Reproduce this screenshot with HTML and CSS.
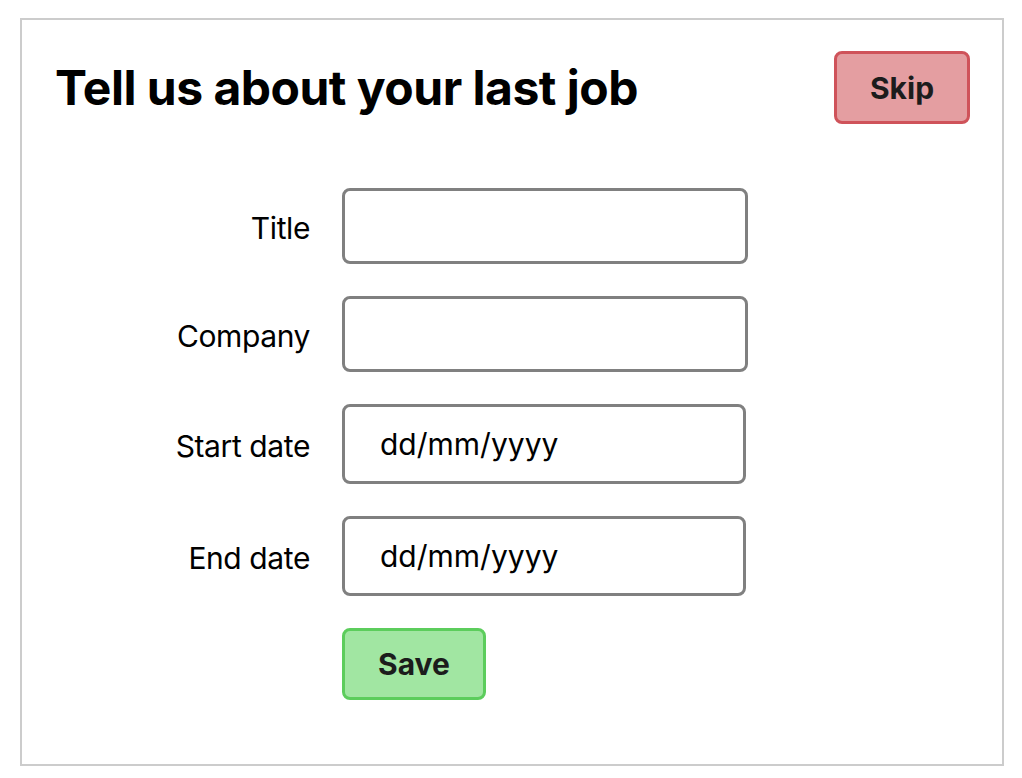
FILE: index.html
```html
<!DOCTYPE html>
<html lang="en">
<head>
<meta charset="utf-8">
<title>Tell us about your last job</title>
<link rel="stylesheet" href="styles.css">
</head>
<body>
  <div class="card">
    <div class="header">
      <h1 class="title">Tell us about your last job</h1>
      <button class="btn btn-skip" type="button">Skip</button>
    </div>
    <form class="form">
      <label class="label" for="f-title">Title</label>
      <input class="field" id="f-title" type="text">
      <label class="label" for="f-company">Company</label>
      <input class="field" id="f-company" type="text">
      <label class="label" for="f-start">Start date</label>
      <input class="field field-date" id="f-start" type="text" placeholder="dd/mm/yyyy">
      <label class="label" for="f-end">End date</label>
      <input class="field field-date" id="f-end" type="text" placeholder="dd/mm/yyyy">
      <span class="label"></span>
      <div class="actions">
        <button class="btn btn-save" type="button">Save</button>
      </div>
    </form>
  </div>
</body>
</html>
```
FILE: styles.css
```css
html, body {
  margin: 0;
  padding: 0;
  background: #ffffff;
}

body {
  font-family: Inter, "Noto Sans", "Liberation Sans", sans-serif;
  color: #000;
  padding: 18px 18px 0 20px;
}

.card {
  box-sizing: content-box;
  width: 916px;
  border: 2px solid #cccccc;
  padding: 31px 32px 64px 32px;
}

.header {
  display: flex;
  align-items: center;
  justify-content: space-between;
  height: 73px;
}

.title {
  margin: 0;
  font-size: 48px;
  font-weight: 700;
  letter-spacing: -0.5px;
  line-height: 1;
  padding-left: 1px;
}

.btn {
  font-family: Inter, "Noto Sans", "Liberation Sans", sans-serif;
  font-weight: 700;
  font-size: 30px;
  color: #1c1c1c;
  border-radius: 8px;
  border: 3px solid;
  padding: 0;
  cursor: pointer;
}

.btn-skip {
  width: 136px;
  height: 73px;
  background: #e49ea1;
  border-color: #cf535a;
}

.btn-save {
  width: 144px;
  height: 72px;
  background: #a1e6a2;
  border-color: #5ccd5c;
}

.form {
  margin-top: 64px;
  display: grid;
  grid-template-columns: 256px 406px;
  column-gap: 32px;
  row-gap: 32px;
  align-items: center;
}

.label {
  text-align: right;
  font-size: 30px;
  letter-spacing: -0.4px;
  padding-top: 4px;
}

.field {
  box-sizing: border-box;
  width: 406px;
  height: 76px;
  border: 3px solid #808080;
  border-radius: 8px;
  background: #fff;
  font-family: Inter, "Noto Sans", "Liberation Sans", sans-serif;
  font-size: 30px;
  padding: 0 20px;
  outline: none;
}

.field-date {
  height: 80px;
  width: 404px;
  padding-left: 35px;
}

.field-date::placeholder {
  color: #000;
  opacity: 1;
}

.actions {
  display: flex;
}
```
